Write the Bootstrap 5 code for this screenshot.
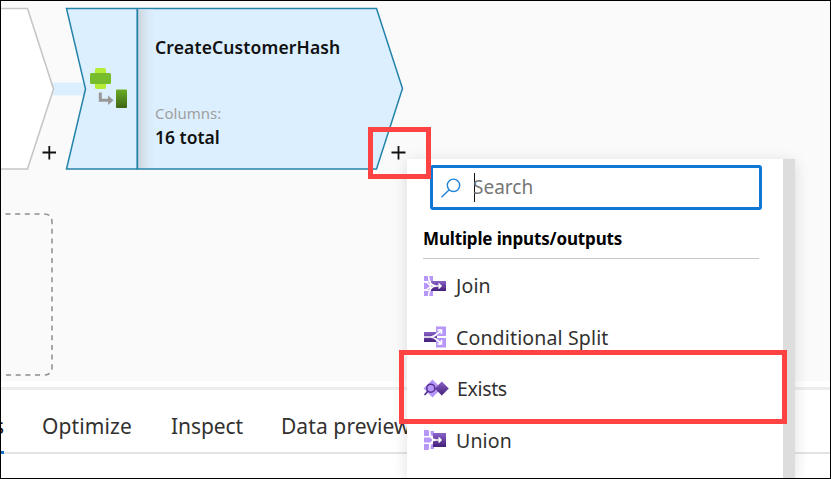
<!DOCTYPE html>
<html lang="en">
<head>
<meta charset="utf-8">
<meta name="viewport" content="width=device-width, initial-scale=1">
<title>Data flow</title>
<link href="https://cdn.jsdelivr.net/npm/bootstrap@5.3.0/dist/css/bootstrap.min.css" rel="stylesheet">
<style>
body{font-family:"Noto Sans","Open Sans",sans-serif;color:#323130}
.app{width:831px;height:479px;border:1px solid #000;background:#fff}
.flow{height:380px;background:#fafafa}
.flow>svg{display:block}
.node-text{left:154px;top:34px;color:#111;line-height:24px}
.node-title{font-size:17.5px;font-weight:600;letter-spacing:.13px}
.node-label{font-size:15px;color:#a09f9e;margin-top:43px;line-height:23px}
.node-total{font-size:17.5px;font-weight:600;letter-spacing:0}
.splitter{height:3px;margin-top:6px;background:#ededed}
.tabs{height:64px;border-bottom:2px solid #e3e3e3;font-size:21px;letter-spacing:-.1px;line-height:30px;padding-top:21px}
.tabs .t0{width:3px;height:43px;direction:rtl;border-bottom:3px solid #0f6fd1;color:#111}
.tabs .t1{margin-left:38px;letter-spacing:.12px}.tabs .t2{margin-left:39px}.tabs .t3{margin-left:38px;letter-spacing:.1px}
.picker{left:406px;top:158px;width:388px;height:319px;box-shadow:0 3px 14px rgba(0,0,0,.13)}
.picker-body{padding:6px 24px 0 16px}
.search{height:45px;margin:0 -3px 0 7px;border:3px solid #0f78d4;border-radius:3px;padding-left:8px;font-size:19px;color:#767676}
.search span{border-left:1.5px solid #111;height:29px;line-height:28px;margin-left:13px;letter-spacing:0}
.search span i{font-style:normal;margin-left:-2px}
.group-title{font-size:17px;font-weight:700;color:#000;line-height:24px;margin-top:17px;padding-bottom:7px;border-bottom:1px solid #c8c8c8;letter-spacing:-.15px}
.pick{height:51.5px;font-size:19.5px;letter-spacing:.15px;gap:9px}
.pick:first-child{margin-top:1px}
.exists-label{letter-spacing:-.35px;margin-left:-1px}
.thumb{width:12px;background:#ddd}
.callout{border:5px solid #ff4343;z-index:3}
</style>
<script src="https://cdn.jsdelivr.net/npm/bootstrap@5.3.0/dist/js/bootstrap.bundle.min.js"></script>
</head>
<body class="m-0 overflow-hidden">
<div class="app position-relative overflow-hidden d-flex flex-column">
  <main class="flow position-relative flex-shrink-0">
    <svg width="829" height="380" viewBox="1 1 829 380" fill="none">
      <defs>
        <linearGradient id="edge"><stop stop-color="#ccd5dd"/><stop offset=".5" stop-color="#d7e6f3"/><stop offset="1" stop-color="#dceffe"/></linearGradient>
        <linearGradient id="green" x2="0" y2="1"><stop stop-color="#69ad27"/><stop offset="1" stop-color="#3d6414"/></linearGradient>
      </defs>
      <path d="M52 82.500H88V95.500H52Z" fill="#dceffe"/>
      <path d="M-5 8.500H27.500L53.500 89L27.500 169H-5Z" fill="#fff" stroke="#c6c6c6" stroke-width="1.600"/>
      <path d="M66.500 8.500H376.500L402.500 88.500L376.500 169H66.500L85.500 89Z" fill="#dceffe" stroke="#2383a8" stroke-width="1.500"/>
      <path d="M138 9.500H154V168H138Z" fill="url(#edge)"/>
      <path d="M137.300 8V169.500" stroke="#2383a8" stroke-width="1.800"/>
      <rect x="95" y="68" width="11" height="21" rx="1.500" fill="#b5ec36"/>
      <rect x="90" y="73" width="21" height="11" rx="1.500" fill="#76bc2d"/>
      <path d="M100.300 92.500V100.300H109" stroke="#999" stroke-width="3"/><path d="M108 95.500L113.500 100.300L108 105Z" fill="#999"/>
      <rect x="116" y="89.500" width="11" height="18.500" rx="1" fill="url(#green)"/>
      <path d="M42.500 152.500H56M49.300 146V159.500M391.500 152.500H405.500M398.500 146V159.500" stroke="#111" stroke-width="1.800"/>
      <path d="M5.500 214H44Q52 214 52 222V367Q52 375 44 375H5.500" stroke="#8d8d8d" stroke-width="1.500" stroke-dasharray="5 4.670"/>
    </svg>
    <div class="node-text position-absolute">
      <div class="node-title">CreateCustomerHash</div>
      <div class="node-label">Columns:</div>
      <div class="node-total">16 total</div>
    </div>
  </main>
  <div class="splitter flex-shrink-0"></div>
  <nav class="tabs d-flex flex-shrink-0">
    <span class="t0 overflow-hidden">s</span>
    <span class="t1">Optimize</span><span class="t2">Inspect</span><span class="t3 text-nowrap">Data preview</span>
  </nav>

  <section class="picker position-absolute bg-white d-flex">
    <div class="picker-body flex-grow-1">
      <div class="search d-flex align-items-center">
        <svg width="20" height="20" viewBox="0 0 20 20" fill="none" stroke="#2184d8" stroke-width="1.400"><circle cx="12.500" cy="7.300" r="6.200"/><path d="M8.200 11.800L.5 19.300"/></svg>
        <span><i>Search</i></span>
      </div>
      <div class="group-title">Multiple inputs/outputs</div>
      <div>
        <div class="pick d-flex align-items-center">
          <svg width="24" height="24" viewBox="0 0 24 24"><defs><linearGradient id="violet" x2="0" y2="1"><stop stop-color="#8a62c9"/><stop offset="1" stop-color="#432078"/></linearGradient></defs><path d="M1 2H10V7H1ZM1 8H7V16H1ZM1 17H10V22H1Z" fill="#b796f9"/><path d="M8 7H23V17H8Z" fill="url(#violet)"/><path d="M0 7.500L4 8.500L8 12L4 15.500L0 16.500M5.500 1C5.500 7 8 12 13 12H18M5.500 23C5.500 17 8 12 13 12M15.500 9.500L18 12L15.500 14.500" fill="none" stroke="#fff" stroke-width="1.500"/></svg>
          <span>Join</span>
        </div>
        <div class="pick d-flex align-items-center">
          <svg width="24" height="24" viewBox="0 0 24 24"><path d="M1 7H14V17H1Z" fill="url(#violet)"/><path d="M13 1.500H23V11H13ZM13 13H23V22.500H13Z" fill="#b796f9"/><path d="M1 12H8C12 12 14 8 18 6M8 12C12 12 14 16 18 18M14.500 5H18.500V9M14.500 19H18.500V15" fill="none" stroke="#fff" stroke-width="1.600"/></svg>
          <span>Conditional Split</span>
        </div>
        <div class="pick d-flex align-items-center">
          <svg width="26" height="24" viewBox="0 0 26 24" class="me-n1"><path d="M9.500 2.500L18.500 11.500L9.500 20.500L.5 11.500Z" fill="#b796f9"/><path d="M18.800 4.500L25.800 11.500L18.800 18.500L11.800 11.500Z" fill="url(#violet)"/><circle cx="7.800" cy="11.200" r="4" fill="#b796f9" stroke="#54308d" stroke-width="1.500"/><path d="M5 14.200L1.500 18" stroke="#54308d" stroke-width="1.700"/></svg>
          <span class="exists-label">Exists</span>
        </div>
        <div class="pick d-flex align-items-center">
          <svg width="24" height="24" viewBox="0 0 24 24"><path d="M1 2H6V8H1ZM1 9.500H9V14.500H1ZM1 16H6V22H1ZM7 3H11V8H7ZM7 16H11V21H7Z" fill="#b796f9"/><path d="M10 5H23V19H10Z" fill="url(#violet)"/><path d="M6.500 1.500C6.500 8 9 12 13 12H18M6.500 22.500C6.500 16 9 12 13 12M15.500 9.500L18 12L15.500 14.500" fill="none" stroke="#fff" stroke-width="1.600"/></svg>
          <span>Union</span>
        </div>
      </div>
    </div>
    <div class="thumb flex-shrink-0"></div>
  </section>
  <div class="callout position-absolute" style="left:367px;top:126px;width:63px;height:52px"></div>
  <div class="callout position-absolute" style="left:398px;top:349px;width:388px;height:74px"></div>
</div>
</body>
</html>
